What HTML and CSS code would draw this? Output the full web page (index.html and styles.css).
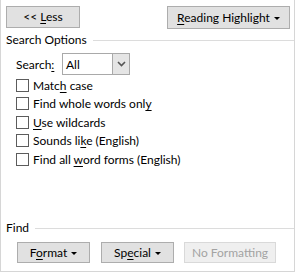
FILE: index.html
```html
<!DOCTYPE html>
<html>
<head>
<meta charset="utf-8">
<link rel="stylesheet" href="styles.css">
</head>
<body>
<div class="dialog">
  <div class="toprow">
    <button class="btn less"><span>&lt;&lt; <u>L</u>ess</span></button>
    <button class="btn reading"><span><u>R</u>eading Highlight</span><span class="caret"></span></button>
  </div>
  <div class="group"><span class="gtitle">Search Options</span><span class="gline"></span></div>
  <div class="searchrow">
    <span class="slabel">Search<u>:</u></span>
    <div class="select"><span class="sval">All</span><span class="sarrow"><svg width="9" height="6" viewBox="0 0 9 6"><polyline points="1,1 4.5,4.5 8,1" fill="none" stroke="#555" stroke-width="1.6"/></svg></span></div>
  </div>
  <div class="checks">
    <label class="chk"><span class="box"></span><span>Matc<u>h</u> case</span></label>
    <label class="chk"><span class="box"></span><span>Find whole words onl<u>y</u></span></label>
    <label class="chk"><span class="box"></span><span><u>U</u>se wildcards</span></label>
    <label class="chk"><span class="box"></span><span>Sounds li<u>k</u>e (English)</span></label>
    <label class="chk"><span class="box"></span><span>Find all <u>w</u>ord forms (English)</span></label>
  </div>
  <div class="spacer"></div>
  <div class="group find"><span class="gtitle">Find</span><span class="gline"></span></div>
  <div class="bottomrow">
    <button class="btn fmt"><span>F<u>o</u>rmat</span><span class="caret"></span></button>
    <button class="btn spc"><span>Sp<u>e</u>cial</span><span class="caret"></span></button>
    <button class="btn nofmt" disabled><span>No Formatting</span></button>
  </div>
</div>
</body>
</html>
```
FILE: styles.css
```css
html, body {
  margin: 0;
  padding: 0;
  background: #ffffff;
}
body {
  font-family: "Segoe UI", Lato, "Noto Sans", sans-serif;
  font-size: 12px;
  color: #000;
}
.dialog {
  box-sizing: border-box;
  width: 295px;
  height: 272px;
  border-left: 1px solid #d6d6d6;
  border-right: 1px solid #d6d6d6;
  border-bottom: 1px solid #d6d6d6;
  padding: 6px 0 0 5px;
  display: flex;
  flex-direction: column;
}
u { text-decoration: underline; text-underline-offset: 2px; }
.toprow {
  display: flex;
  justify-content: space-between;
  padding-right: 4px;
}
.btn {
  box-sizing: border-box;
  height: 22px;
  font: inherit;
  color: #000;
  background: #e1e1e1;
  border: 1px solid #adadad;
  padding: 0;
  display: flex;
  align-items: center;
  justify-content: center;
  line-height: 16px;
  white-space: pre;
}
.less { width: 74px; }
.reading { width: 123px; height: 23px; }
.caret {
  display: inline-block;
  width: 0; height: 0;
  border-left: 3px solid transparent;
  border-right: 3px solid transparent;
  border-top: 3px solid #000;
  margin-left: 4px;
  margin-top: 1px;
}
.group {
  display: flex;
  align-items: center;
  height: 16px;
  margin-top: 3px;
}
.gtitle { line-height: 16px; white-space: nowrap; }
.gline {
  flex: 1;
  height: 1px;
  background: #dcdcdc;
  margin-left: 6px;
}
.find { margin-top: 0; }
.searchrow {
  display: flex;
  align-items: center;
  margin-top: 5px;
  padding-left: 10px;
  height: 22px;
}
.slabel { width: 46px; }
.select {
  box-sizing: border-box;
  width: 68px;
  height: 22px;
  border: 1px solid #a9a9a9;
  display: flex;
  align-items: center;
}
.sval { flex: 1; padding-left: 3px; }
.sarrow {
  width: 16px;
  height: 20px;
  background: #e5e5e5;
  border-left: 1px solid #a9a9a9;
  display: flex;
  align-items: center;
  justify-content: center;
}
.checks {
  display: flex;
  flex-direction: column;
  padding-left: 10px;
  margin-top: 1px;
}
.chk {
  display: flex;
  align-items: center;
  height: 18.5px;
  white-space: pre;
}
.box {
  box-sizing: border-box;
  width: 13px;
  height: 13px;
  border: 1px solid #5c5c5c;
  background: #fff;
  margin-right: 4px;
}
.spacer { flex: 1; }
.bottomrow {
  display: flex;
  padding-left: 11px;
  margin-top: 6px;
  margin-bottom: 8px;
}
.fmt { width: 73px; height: 21px; margin-right: 11px; }
.spc { width: 73px; height: 21px; margin-right: 10px; }
.nofmt {
  width: 92px;
  height: 21px;
  background: #efefef;
  border-color: #d9d9d9;
  color: #a3a3a3;
}
```
